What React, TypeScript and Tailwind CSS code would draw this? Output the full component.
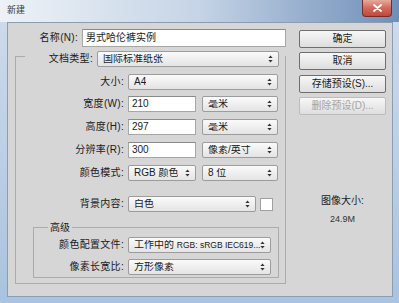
import React from "react";

const font = { fontFamily: '"Liberation Sans", "Noto Sans CJK SC", sans-serif' };

function Arrows() {
  return (
    <svg width="5" height="8" viewBox="0 0 5 8" className="shrink-0">
      <path d="M2.5 0.5 L4.6 3 L0.4 3 Z" fill="#333" />
      <path d="M2.5 7.5 L4.6 5 L0.4 5 Z" fill="#333" />
    </svg>
  );
}

function Select({ w, children }: { w: string; children?: React.ReactNode }) {
  return (
    <div
      className={`${w} h-[16px] flex items-center justify-between pl-[5px] pr-[5px] rounded-[2px] border border-[#9c9c9c] bg-gradient-to-b from-[#fafafa] to-[#e4e4e4] text-[10px] leading-none text-[#1a1a1a] overflow-hidden whitespace-nowrap`}
    >
      <span className="overflow-hidden whitespace-nowrap">{children}</span>
      <Arrows />
    </div>
  );
}

function Input({ w, h = "h-[16px]", children }: { w: string; h?: string; children?: React.ReactNode }) {
  return (
    <div
      className={`${w} ${h} flex items-center pl-[3px] border border-[#a6a6a6] border-t-[#8a8a8a] bg-white text-[10px] leading-none text-[#1a1a1a]`}
    >
      {children}
    </div>
  );
}

function Label({ w, children }: { w: string; children: React.ReactNode }) {
  return (
    <div className={`${w} shrink-0 text-right text-[10px] leading-none text-[#1a1a1a] pr-[4px] tracking-[0.3px]`}>
      {children}
    </div>
  );
}

function Button({ children, disabled }: { children: React.ReactNode; disabled?: boolean }) {
  return (
    <div
      className={`h-[18px] w-[87px] flex items-center justify-center rounded-[2px] border text-[10px] leading-none bg-gradient-to-b from-[#f7f7f7] to-[#dedede] ${
        disabled ? "border-[#bcbcbc] text-[#a4a4a4]" : "border-[#6e6e6e] text-[#1a1a1a]"
      }`}
    >
      {children}
    </div>
  );
}

export default function App() {
  return (
    <div
      className="w-[399px] h-[303px] overflow-hidden flex flex-col bg-gradient-to-b from-[#cfdcec] to-[#a9c3e0]"
      style={font}
    >
      {/* title bar */}
      <div className="h-[22px] flex items-start justify-between bg-gradient-to-r from-[#eef2f7] via-[#c5d4e6] to-[#6f8fb8]">
        <div className="pl-[7px] pt-[6px] text-[9px] leading-none text-[#3a3a3a]">新建</div>
        <div className="mr-[7px] w-[30px] h-[17px] flex items-center justify-center rounded-b-[4px] border border-t-0 border-[#7a2c24] bg-gradient-to-b from-[#e7a99b] via-[#d06a5c] to-[#c2463a]">
          <svg width="9" height="8" viewBox="0 0 9 8">
            <path d="M1 1 L8 7 M8 1 L1 7" stroke="#fff" strokeWidth="1.8" strokeLinecap="round" />
          </svg>
        </div>
      </div>

      {/* client */}
      <div className="ml-[7px] w-[386px] h-[275px] bg-[#d6d6d6] border border-[#8c9db2] flex pt-[6px]">
        {/* left column */}
        <div className="w-[284px] flex flex-col">
          <div className="h-[18px] flex items-center">
            <Label w="w-[74px]">名称(N):</Label>
            <Input w="w-[204px]" h="h-[18px]">男式哈伦裤实例</Input>
          </div>

          <div className="ml-[7px] mt-[9px] w-[271px] border border-[#ababab] flex flex-col pb-[5px]">
            <div className="-mt-[6px] ml-[9px] h-[16px] flex items-center bg-[#d6d6d6]">
              <Label w="w-[72px]">文档类型:</Label>
              <Select w="w-[182px]">国际标准纸张</Select>
            </div>
            <div className="mt-[7px] h-[16px] flex items-center">
              <Label w="w-[112px]">大小:</Label>
              <Select w="w-[150px]">A4</Select>
            </div>
            <div className="mt-[6px] h-[16px] flex items-center">
              <Label w="w-[112px]">宽度(W):</Label>
              <Input w="w-[68px]">210</Input>
              <div className="ml-[6px]">
                <Select w="w-[76px]">毫米</Select>
              </div>
            </div>
            <div className="mt-[7px] h-[16px] flex items-center">
              <Label w="w-[112px]">高度(H):</Label>
              <Input w="w-[68px]">297</Input>
              <div className="ml-[6px]">
                <Select w="w-[76px]">毫米</Select>
              </div>
            </div>
            <div className="mt-[7px] h-[16px] flex items-center">
              <Label w="w-[112px]">分辨率(R):</Label>
              <Input w="w-[68px]">300</Input>
              <div className="ml-[6px]">
                <Select w="w-[76px]">像素/英寸</Select>
              </div>
            </div>
            <div className="mt-[7px] h-[16px] flex items-center">
              <Label w="w-[112px]">颜色模式:</Label>
              <Select w="w-[68px]">RGB 颜色</Select>
              <div className="ml-[6px]">
                <Select w="w-[76px]">8 位</Select>
              </div>
            </div>
            <div className="mt-[15px] h-[16px] flex items-center">
              <Label w="w-[112px]">背景内容:</Label>
              <Select w="w-[128px]">白色</Select>
              <div className="ml-[4px] w-[13px] h-[13px] bg-white border border-[#a0a0a0]" />
            </div>

            {/* advanced */}
            <div className="ml-[17px] mt-[15px] w-[246px] border border-[#ababab] flex flex-col pb-[2px]">
              <div className="-mt-[6px] ml-[14px] px-[2px] self-start bg-[#d6d6d6] text-[10px] leading-none text-[#1a1a1a] h-[11px] flex items-center">
                高级
              </div>
              <div className="mt-[4px] h-[16px] flex items-center">
                <Label w="w-[94px]">颜色配置文件:</Label>
                <Select w="w-[143px]">
                  工作中的 <span className="text-[8.5px]">RGB: sRGB IEC619...</span>
                </Select>
              </div>
              <div className="mt-[6px] h-[16px] flex items-center">
                <Label w="w-[94px]">像素长宽比:</Label>
                <Select w="w-[143px]">方形像素</Select>
              </div>
            </div>
          </div>
        </div>

        {/* right column */}
        <div className="ml-[7px] mt-[1px] w-[87px] flex flex-col">
          <Button>确定</Button>
          <div className="mt-[4px]">
            <Button>取消</Button>
          </div>
          <div className="mt-[5px]">
            <Button>存储预设(S)...</Button>
          </div>
          <div className="mt-[4px]">
            <Button disabled>删除预设(D)...</Button>
          </div>
          <div className="mt-[81px] text-center text-[10px] leading-none text-[#1a1a1a]">图像大小:</div>
          <div className="mt-[9px] text-center text-[9px] leading-none text-[#333]">24.9M</div>
        </div>
      </div>
    </div>
  );
}
